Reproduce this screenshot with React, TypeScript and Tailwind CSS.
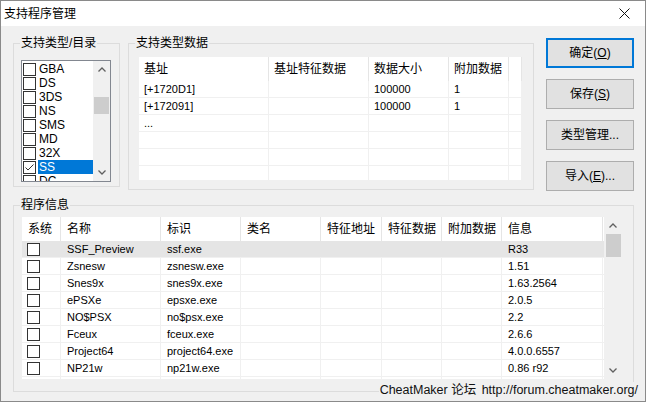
import type { ReactNode } from 'react';

const FONT = "font-['Liberation_Sans','Noto_Sans_CJK_SC',sans-serif]";

function Check({ checked = false }: { checked?: boolean }) {
  return (
    <div className="w-[13px] h-[13px] shrink-0 border border-[#333333] bg-white flex items-center justify-center">
      {checked && (
        <svg width="11" height="11" viewBox="0 0 11 11">
          <path d="M1.5 5.5 L4 8 L9.5 2.5" stroke="#333333" strokeWidth="1" fill="none" />
        </svg>
      )}
    </div>
  );
}

function Chevron({ down = false }: { down?: boolean }) {
  return (
    <svg width="8" height="5" viewBox="0 0 8 5" className={down ? 'rotate-180' : ''}>
      <path d="M0.5 4.5 L4 1 L7.5 4.5" stroke="#606060" strokeWidth="1.3" fill="none" />
    </svg>
  );
}

function ScrollBar({ thumbTop, thumbHeight, width = 17 }: { thumbTop: number; thumbHeight: number; width?: number }) {
  return (
    <div className="h-full bg-[#f0f0f0] flex flex-col shrink-0" style={{ width }}>
      <div className="h-[17px] flex items-center justify-center">
        <Chevron />
      </div>
      <div className="flex-1 flex justify-center">
        <div className="w-[15px] bg-[#cdcdcd]" style={{ marginTop: thumbTop, height: thumbHeight }} />
      </div>
      <div className="h-[17px] flex items-center justify-center">
        <Chevron down />
      </div>
    </div>
  );
}

function Group({ label, className, children }: { label: string; className: string; children: ReactNode }) {
  return (
    <fieldset className={`border border-[#dcdcdc] ${className}`}>
      <legend className="ml-[6px] px-[1px] text-[12px] leading-[16px] text-black">{label}</legend>
      {children}
    </fieldset>
  );
}

function Btn({ children, focused = false }: { children: ReactNode; focused?: boolean }) {
  return (
    <div
      className={`h-[30px] w-[88px] flex items-center justify-center bg-[#e1e1e1] text-[12px] text-black ${
        focused ? 'border-2 border-[#0078d7]' : 'border border-[#adadad]'
      }`}
    >
      {children}
    </div>
  );
}

const types = ['GBA', 'DS', '3DS', 'NS', 'SMS', 'MD', '32X', 'SS', 'DC'];

const dataCols = [130, 100, 80, 60, 13];
const dataHead = ['基址', '基址特征数据', '数据大小', '附加数据', ''];
const dataRows = [
  ['[+1720D1]', '', '100000', '1', ''],
  ['[+172091]', '', '100000', '1', ''],
  ['...', '', '', '', ''],
  ['', '', '', '', ''],
  ['', '', '', '', ''],
  ['', '', '', '', ''],
];

const progCols = [39, 100, 80, 80, 61, 60, 60, 101];
const progHead = ['系统', '名称', '标识', '类名', '特征地址', '特征数据', '附加数据', '信息'];
const programs = [
  ['SSF_Preview', 'ssf.exe', 'R33'],
  ['Zsnesw', 'zsnesw.exe', '1.51'],
  ['Snes9x', 'snes9x.exe', '1.63.2564'],
  ['ePSXe', 'epsxe.exe', '2.0.5'],
  ['NO$PSX', 'no$psx.exe', '2.2'],
  ['Fceux', 'fceux.exe', '2.6.6'],
  ['Project64', 'project64.exe', '4.0.0.6557'],
  ['NP21w', 'np21w.exe', '0.86 r92'],
  ['', '', ''],
];

export default function App() {
  return (
    <div className={`${FONT} relative w-[646px] h-[402px] overflow-hidden border border-[#8a8a8a] bg-[#f0f0f0] text-black flex flex-col`}>
      {/* title bar */}
      <div className="h-[25px] bg-white flex items-center justify-between pl-[3px] pr-[15px] shrink-0">
        <span className="text-[12px] leading-[16px]">支持程序管理</span>
        <svg width="11" height="11" viewBox="0 0 11 11">
          <path d="M0.5 0.5 L10.5 10.5 M10.5 0.5 L0.5 10.5" stroke="#111" strokeWidth="1" />
        </svg>
      </div>

      <div className="pl-[12px] pt-[9px] flex flex-col">
        <div className="flex items-start">
          <Group label="支持类型/目录" className="w-[107px] h-[152px]">
            <div className="ml-[7px] mt-[9px] w-[90px] h-[122px] border border-[#828790] bg-white flex overflow-hidden">
              <div className="flex-1 pt-[1px] flex flex-col overflow-hidden">
                {types.map((t) => (
                  <div key={t} className="h-[14px] shrink-0 flex items-center pl-[1px]">
                    <Check checked={t === 'SS'} />
                    <div
                      className={`ml-[2px] flex-1 h-[14px] pl-[1px] text-[12px] leading-[14px] ${
                        t === 'SS' ? 'bg-[#0078d7] text-white' : ''
                      }`}
                    >
                      {t}
                    </div>
                  </div>
                ))}
              </div>
              <ScrollBar thumbTop={19} thumbHeight={17} />
            </div>
          </Group>

          <Group label="支持类型数据" className="ml-[8px] w-[406px] h-[155px]">
            <div className="ml-[10px] mt-[6px] w-[383px] h-[123px] bg-white overflow-hidden">
              <div className="flex h-[24px]">
                {dataHead.map((h, i) => (
                  <div
                    key={i}
                    className="shrink-0 h-full border-r border-[#e5e5e5] pl-[5px] flex items-center text-[12px]"
                    style={{ width: dataCols[i] }}
                  >
                    {h}
                  </div>
                ))}
              </div>
              {dataRows.map((r, ri) => (
                <div key={ri} className="flex h-[17px] border-b border-[#f0f0f0]">
                  {r.map((c, i) => (
                    <div
                      key={i}
                      className="shrink-0 h-full border-r border-[#f0f0f0] pl-[5px] text-[11px] leading-[16px]"
                      style={{ width: dataCols[i] }}
                    >
                      {c}
                    </div>
                  ))}
                </div>
              ))}
            </div>
          </Group>

          <div className="ml-[12px] pt-[3px] flex flex-col gap-[11px]">
            <Btn focused>
              确定(<span className="underline">O</span>)
            </Btn>
            <Btn>
              保存(<span className="underline">S</span>)
            </Btn>
            <Btn>类型管理...</Btn>
            <Btn>
              导入(<span className="underline">E</span>)...
            </Btn>
          </div>
        </div>

        <Group label="程序信息" className="mt-[6px] w-[621px] h-[195px]">
          <div className="ml-[8px] mt-[4px] w-[600px] h-[162px] bg-white flex overflow-hidden">
            <div className="w-[582px] shrink-0 flex flex-col overflow-hidden">
              <div className="flex h-[24px] shrink-0">
                {progHead.map((h, i) => (
                  <div
                    key={i}
                    className="shrink-0 h-full border-r border-[#e5e5e5] pl-[6px] flex items-center text-[12px]"
                    style={{ width: progCols[i] }}
                  >
                    {h}
                  </div>
                ))}
              </div>
              {programs.map((p, ri) => {
                const cells = ['', p[0], p[1], '', '', '', '', p[2]];
                return (
                  <div
                    key={ri}
                    className={`flex h-[17px] shrink-0 border-b border-[#f0f0f0] ${ri === 0 ? 'bg-[#e5e5e5]' : ''}`}
                  >
                    {cells.map((c, i) => (
                      <div
                        key={i}
                        className={`shrink-0 h-full pl-[6px] text-[11px] leading-[16px] flex items-center ${
                          ri === 0 ? '' : 'border-r border-[#f0f0f0]'
                        }`}
                        style={{ width: progCols[i] }}
                      >
                        {i === 0 ? (
                          <div className="-ml-[1px]">
                            <Check />
                          </div>
                        ) : (
                          c
                        )}
                      </div>
                    ))}
                  </div>
                );
              })}
            </div>
            <ScrollBar thumbTop={0} thumbHeight={23} width={18} />
          </div>
        </Group>
      </div>

      {/* footer link over the group border */}
      <div className="absolute right-[6px] top-[381px] bg-[#f0f0f0] px-[1px] text-[12.5px] leading-[16px] text-[#111]">
        CheatMaker 论坛 <span className="ml-[2px]">http://forum.cheatmaker.org/</span>
      </div>
    </div>
  );
}
